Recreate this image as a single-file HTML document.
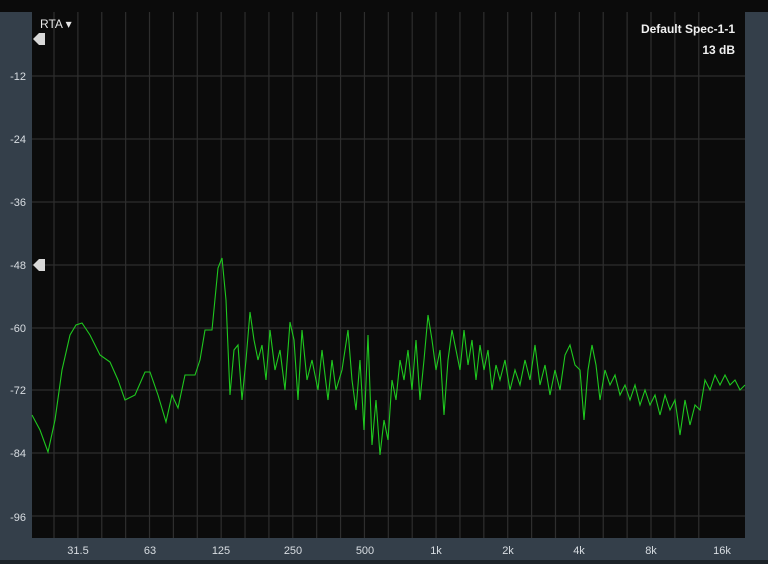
<!DOCTYPE html>
<html><head><style>
body{margin:0;width:768px;height:564px;overflow:hidden;background:#343f4a;font-family:"Liberation Sans",sans-serif;}
</style></head><body>
<svg width="768" height="564" style="position:absolute;left:0;top:0">
<rect x="0" y="0" width="768" height="12" fill="#0b0b0b"/>
<rect x="32" y="12" width="713" height="526" fill="#0b0b0b"/>
<rect x="0" y="560" width="768" height="4" fill="#1c2228"/>
<g stroke="#2e2e2e" stroke-width="1.2" id="g"></g>
<g fill="#d8dde2" font-size="11" text-anchor="end">
<text x="26" y="80">-12</text><text x="26" y="143">-24</text><text x="26" y="206">-36</text><text x="26" y="269">-48</text><text x="26" y="332">-60</text><text x="26" y="394">-72</text><text x="26" y="457">-84</text><text x="26" y="521">-96</text>
</g>
<g fill="#d8dde2" font-size="11" text-anchor="middle">
<text x="78" y="554">31.5</text><text x="150" y="554">63</text><text x="221" y="554">125</text><text x="293" y="554">250</text><text x="365" y="554">500</text><text x="436" y="554">1k</text><text x="508" y="554">2k</text><text x="579" y="554">4k</text><text x="651" y="554">8k</text><text x="722" y="554">16k</text>
</g>
<text x="40" y="28" fill="#e8e8e8" font-size="12">RTA ▾</text>
<text x="735" y="33" fill="#f0f0f0" font-size="12" font-weight="bold" text-anchor="end">Default Spec-1-1</text>
<text x="735" y="54" fill="#f0f0f0" font-size="12" font-weight="bold" text-anchor="end">13 dB</text>
<polygon points="33,39 39,33 45,33 45,45 39,45" fill="#d8d8d8"/>
<polygon points="33,265 39,259 45,259 45,271 39,271" fill="#d8d8d8"/>
<polyline fill="none" stroke="#1fc81f" stroke-width="1.1" points="32,415 40,430 48,452 55,420 62,370 70,335 76,325 82,323 90,335 100,355 110,362 118,380 125,400 135,395 145,372 150,372 158,395 166,422 172,395 178,408 185,375 195,375 200,360 205,330 212,330 218,268 222,258 226,300 230,395 234,350 238,345 242,400 246,360 250,312 254,340 258,360 262,345 266,380 270,330 275,370 280,350 285,390 290,322 294,340 298,400 302,330 307,380 312,360 318,390 322,350 328,400 332,360 336,390 342,370 348,330 352,380 356,410 360,360 364,430 368,335 372,445 376,400 380,455 384,420 388,440 392,380 396,400 400,360 404,380 408,350 412,390 416,340 420,400 424,360 428,315 432,340 436,370 440,350 444,415 448,360 452,330 456,350 460,370 464,330 468,365 472,340 476,380 480,345 484,370 488,350 492,390 496,365 500,380 505,360 510,390 515,370 520,385 525,360 530,380 535,345 540,385 545,365 550,395 555,370 560,390 565,355 570,345 575,365 580,370 584,420 588,370 592,345 596,365 600,400 605,370 610,385 615,375 620,395 625,385 630,400 635,385 640,405 645,390 650,405 655,395 660,415 665,395 670,410 675,400 680,435 685,400 690,425 695,405 700,410 705,380 710,390 715,375 720,385 725,375 730,385 735,380 740,390 745,385"/>
</svg>
<script>
var g=document.getElementById('g'),s='';
for(var k=0;k<30;k++){var x=651-23.88*k;if(x>33)s+='<line x1="'+x+'" y1="12" x2="'+x+'" y2="538"/>';}
for(var k=1;k<3;k++){var x=651+23.88*k;if(x<745)s+='<line x1="'+x+'" y1="12" x2="'+x+'" y2="538"/>';}
[76,139,202,265,328,390,453,516].forEach(function(y){s+='<line x1="32" y1="'+y+'" x2="745" y2="'+y+'"/>';});
g.innerHTML=s;
</script>
</body></html>
